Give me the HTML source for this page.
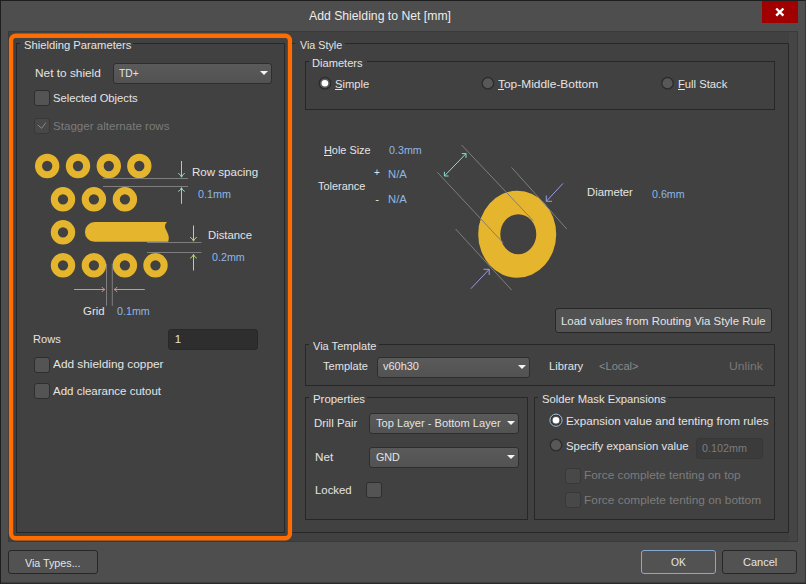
<!DOCTYPE html>
<html><head><meta charset="utf-8"><title>Add Shielding to Net [mm]</title>
<style>
html,body{margin:0;padding:0;background:#4e4e4e;}
body{width:806px;height:584px;overflow:hidden;font-family:"Liberation Sans",sans-serif;}
#win{position:relative;width:806px;height:584px;background:#4e4e4e;overflow:hidden;}
#win>*{position:absolute;box-sizing:border-box;}
.t{position:absolute;white-space:nowrap;line-height:16px;transform-origin:0 0;font-family:"Liberation Sans",sans-serif;}
.t u{text-decoration:underline;text-underline-offset:1px;}
.frame{left:0;top:0;width:806px;height:584px;border:1px solid;border-color:#1e1e1e #383838 #2a2a2a #1e1e1e;}
.panel{left:8px;top:31px;width:790px;height:511px;background:#414141;border:1px solid #3a3a3a;}
.grp{border:1px solid #272727;}
.gap{background:#414141;height:3px;}
.dd{background:linear-gradient(#5a5a5a,#525252);border:1px solid #2e2e2e;border-radius:3px;}
.dd:after{content:"";position:absolute;right:3px;top:6.5px;border-left:4.5px solid transparent;border-right:4.5px solid transparent;border-top:4.5px solid #f4f4f4;}
.btn{background:#525252;border:1px solid #272727;border-radius:3px;}
.btn.def{border-color:#86a9d0;}
.cb{width:16px;height:16px;background:#545454;border:1px solid #2e2e2e;border-radius:3px;}
.cb.dis{background:#484848;border-color:#383838;}
.inp{background:#2e2e2e;border:1px solid #282828;border-radius:3px;}
.inp.dis{background:#3b3b3b;border-color:#373737;}
.close{left:762px;top:1px;width:36px;height:22px;background:#a00000;}
svg{overflow:visible;}

</style></head>
<body>
<div id="win">
<div class="frame"></div>
<div class="close"><svg width="36" height="22" viewBox="0 0 36 22"><path d="M14.2 7.5 L21.4 14.7 M21.4 7.5 L14.2 14.7" stroke="#fff" stroke-width="2.4" fill="none"/></svg></div>
<div class="panel"></div>
<div style="left:789px;top:32px;width:8px;height:509px;background:#454545"></div>
<div style="left:1px;top:582px;width:804px;height:1px;background:#3e3e3e"></div>

<!-- group boxes -->
<div class="grp" style="left:16px;top:43px;width:269px;height:490px"></div>
<div class="gap" style="left:20px;top:42px;width:113px"></div>
<div class="grp" style="left:290px;top:43px;width:499px;height:490px"></div>
<div class="gap" style="left:295px;top:42px;width:50px"></div>
<div class="grp" style="left:305px;top:61px;width:470px;height:49px"></div>
<div class="gap" style="left:309px;top:60px;width:58px"></div>
<div class="grp" style="left:305px;top:344px;width:470px;height:42px"></div>
<div class="gap" style="left:309px;top:343px;width:70px"></div>
<div class="grp" style="left:305px;top:397px;width:223px;height:123px"></div>
<div class="gap" style="left:309px;top:396px;width:58px"></div>
<div class="grp" style="left:534px;top:397px;width:241px;height:123px"></div>
<div class="gap" style="left:538px;top:396px;width:130px"></div>

<!-- orange highlight -->
<svg style="left:0;top:0" width="806" height="584"><rect x="11.05" y="35.75" width="278.9" height="502.5" rx="4.6" ry="4.6" fill="none" stroke="#ff6c02" stroke-width="4.3"/></svg>

<!-- left panel controls -->
<div class="dd" style="left:113px;top:63px;width:159px;height:21px"></div>
<div class="cb" style="left:34px;top:90px"></div>
<div class="cb dis" style="left:34px;top:118px"><svg width="14" height="14" viewBox="0 0 14 14" style="display:block"><path d="M2.9 6 L6.6 9.3 L10.9 3.6" stroke="#8a8a8a" stroke-width="1" fill="none"/></svg></div>
<div class="inp" style="left:168px;top:329px;width:90px;height:21px"></div>
<div class="cb" style="left:34px;top:357px"></div>
<div class="cb" style="left:34px;top:383px"></div>

<!-- via pattern graphic -->
<svg style="left:0;top:0" width="806" height="584">
 <g fill="#e6b52e">
  <g fill="none" stroke="#e6b52e" stroke-width="7.05">
   <circle cx="47.2" cy="166" r="8.68"/><circle cx="78" cy="166" r="8.68"/><circle cx="108.8" cy="166" r="8.68"/><circle cx="139.3" cy="166" r="8.68"/>
   <circle cx="63" cy="199.3" r="8.68"/><circle cx="93.9" cy="199.3" r="8.68"/><circle cx="124.9" cy="199.3" r="8.68"/>
   <circle cx="63" cy="232.3" r="8.68"/>
   <circle cx="63" cy="265.3" r="8.68"/><circle cx="93.9" cy="265.3" r="8.68"/><circle cx="124.9" cy="265.3" r="8.68"/><circle cx="155.5" cy="265.3" r="8.68"/>
  </g>
  <path d="M94.8 222 H167 C165 224 164.6 226 165.2 228 C166.5 231.5 169 234.5 168.8 238 C168.7 239.5 168.4 241 168.2 241.8 H94.8 A9.9 9.9 0 0 1 94.8 222 Z"/>
 </g>
 <g stroke="#7e7e7e" stroke-width="1" fill="none">
  <path d="M103 178.5 H188 M103 186.5 H188"/>
  <path d="M147 242.5 H201.5 M147 252.5 H201.5"/>
  <path d="M106.5 263.8 V305.8 M112.3 263.8 V305.8"/>
 </g>
 <g stroke="#7fe0c0" stroke-width="1" fill="none">
  <path d="M181.5 161 V177 M178.2 173.3 Q180.8 174.5 181.5 177.2 Q182.2 174.5 184.8 173.3"/>
  <path d="M181.5 203.8 V187.8 M178.2 191.5 Q180.8 190.3 181.5 187.6 Q182.2 190.3 184.8 191.5"/>
 </g>
 <g stroke="#b4dc6a" stroke-width="1" fill="none">
  <path d="M193.5 225.5 V241 M190.2 237.3 Q192.8 238.5 193.5 241.2 Q194.2 238.5 196.8 237.3"/>
  <path d="M193.5 270.5 V254.5 M190.2 258.2 Q192.8 257 193.5 254.3 Q194.2 257 196.8 258.2"/>
 </g>
 <g stroke="#e88a8a" stroke-width="1" fill="none">
  <path d="M74 289.5 H104.8 M101.9 287 Q103 289 105 289.5 Q103 290 101.9 292"/>
  <path d="M144.8 289.5 H114.2 M117.1 287 Q116 289 114 289.5 Q116 290 117.1 292"/>
 </g>
</svg>

<!-- Via Style: radios -->
<svg style="left:0;top:0" width="806" height="584">
 <g>
  <circle cx="324.9" cy="83.2" r="5.7" fill="#5a5a5a" stroke="#2b2b2b" stroke-width="1.3"/><circle cx="324.9" cy="83.2" r="3.3" fill="#fff"/>
  <circle cx="487.9" cy="83.2" r="5.7" fill="#585858" stroke="#2c2c2c" stroke-width="1.3"/>
  <circle cx="667.5" cy="83.2" r="5.7" fill="#585858" stroke="#2c2c2c" stroke-width="1.3"/>
  <circle cx="556" cy="420.2" r="6.1" fill="#2c2c2c" stroke="#a9c4e0" stroke-width="1"/><circle cx="556" cy="420.2" r="4.6" fill="#505050"/><circle cx="556" cy="420.2" r="3.3" fill="#fff"/>
  <circle cx="556" cy="445.1" r="5.7" fill="#585858" stroke="#2c2c2c" stroke-width="1.3"/>
 </g>
 <!-- big via -->
 <g>
  <path fill="#e6b52e" fill-rule="evenodd" d="M478.2 234.2 a39 43.5 0 1 0 78 0 a39 43.5 0 1 0 -78 0 Z M500.3 234.2 a18 20 0 1 0 36 0 a18 20 0 1 0 -36 0 Z"/>
  <g stroke="#7e7e7e" stroke-width="1" fill="none">
   <path d="M461.6 145 L533.2 220.7"/>
   <path d="M437.3 172.2 L503.4 243.1"/>
   <path d="M511.6 167.4 L566.8 229"/>
   <path d="M455.6 229 L511.6 290"/>
  </g>
  <g stroke="#7fe0d0" stroke-width="1" fill="none">
   <path d="M444.4 176 L466 153.6 M444.4 171.8 V176 H448.6 M461.8 153.6 H466 V157.8"/>
  </g>
  <g stroke="#9a9ae0" stroke-width="1" fill="none">
   <path d="M563 183.4 L546.3 201.3 M546.3 195.5 V201.3 H552"/>
   <path d="M470.9 288.7 L489.2 269.3 M483.5 269.3 H489.2 V275"/>
  </g>
 </g>
</svg>

<!-- right side controls -->
<div class="btn" style="left:555px;top:308px;width:217px;height:25px"></div>
<div class="dd" style="left:377px;top:357px;width:153px;height:21px"></div>
<div class="dd" style="left:369px;top:413px;width:150px;height:21px"></div>
<div class="dd" style="left:369px;top:447px;width:150px;height:21px"></div>
<div class="cb" style="left:366px;top:482px"></div>
<div class="inp dis" style="left:696px;top:438px;width:67px;height:21px"></div>
<div class="cb dis" style="left:565px;top:468px"></div>
<div class="cb dis" style="left:565px;top:492px"></div>

<!-- bottom buttons -->
<div class="btn" style="left:8px;top:550px;width:90px;height:24px"></div>
<div class="btn def" style="left:641px;top:550px;width:75px;height:24px"></div>
<div class="btn" style="left:722px;top:550px;width:75px;height:24px"></div>

<span class="t" id="t0" style="left:308.97px;top:7.70px;font-size:12.5px;color:#ececec;transform:scaleX(0.978);">Add Shielding to Net [mm]</span>
<span class="t" id="t1" style="left:24.09px;top:37.40px;font-size:11.5px;color:#e4e4e4;transform:scaleX(0.977);">Shielding Parameters</span>
<span class="t" id="t2" style="left:34.62px;top:64.90px;font-size:11.5px;color:#e4e4e4;transform:scaleX(1.030);">Net to shield</span>
<span class="t" id="t3" style="left:119.14px;top:64.90px;font-size:11.5px;color:#e4e4e4;transform:scaleX(0.893);">TD+</span>
<span class="t" id="t4" style="left:53.07px;top:89.70px;font-size:11.5px;color:#e4e4e4;transform:scaleX(0.973);">Selected Objects</span>
<span class="t" id="t5" style="left:53.02px;top:117.80px;font-size:11.5px;color:#7c7c7c;transform:scaleX(1.007);">Stagger alternate rows</span>
<span class="t" id="t6" style="left:191.72px;top:163.60px;font-size:11px;color:#e4e4e4;transform:scaleX(1.051);">Row spacing</span>
<span class="t" id="t7" style="left:197.69px;top:185.80px;font-size:11px;color:#8db6e6;transform:scaleX(0.978);">0.1mm</span>
<span class="t" id="t8" style="left:207.85px;top:227.00px;font-size:11px;color:#e4e4e4;transform:scaleX(1.030);">Distance</span>
<span class="t" id="t9" style="left:211.69px;top:248.90px;font-size:11px;color:#8db6e6;transform:scaleX(0.973);">0.2mm</span>
<span class="t" id="t10" style="left:83.21px;top:303.00px;font-size:11px;color:#e4e4e4;transform:scaleX(1.039);">Grid</span>
<span class="t" id="t11" style="left:117.04px;top:303.00px;font-size:11px;color:#8db6e6;transform:scaleX(0.974);">0.1mm</span>
<span class="t" id="t12" style="left:33.22px;top:330.60px;font-size:11.5px;color:#e4e4e4;transform:scaleX(0.964);">Rows</span>
<span class="t" id="t13" style="left:174.68px;top:330.60px;font-size:11.5px;color:#e4e4e4;">1</span>
<span class="t" id="t14" style="left:52.97px;top:356.00px;font-size:11.5px;color:#e4e4e4;transform:scaleX(1.029);">Add shielding copper</span>
<span class="t" id="t15" style="left:52.97px;top:382.80px;font-size:11.5px;color:#e4e4e4;">Add clearance cutout</span>
<span class="t" id="t16" style="left:24.86px;top:555.00px;font-size:11.5px;color:#e4e4e4;transform:scaleX(0.931);">Via Types...</span>
<span class="t" id="t17" style="left:299.52px;top:36.60px;font-size:11.5px;color:#e4e4e4;transform:scaleX(0.935);">Via Style</span>
<span class="t" id="t18" style="left:312.45px;top:54.50px;font-size:11.5px;color:#e4e4e4;transform:scaleX(0.965);">Diameters</span>
<span class="t" id="t19" style="left:334.90px;top:75.90px;font-size:11.5px;color:#e4e4e4;transform:scaleX(0.972);"><u>S</u>imple</span>
<span class="t" id="t20" style="left:497.75px;top:75.90px;font-size:11.5px;color:#e4e4e4;transform:scaleX(1.038);"><u>T</u>op-Middle-Bottom</span>
<span class="t" id="t21" style="left:677.55px;top:75.90px;font-size:11.5px;color:#e4e4e4;transform:scaleX(0.976);"><u>F</u>ull Stack</span>
<span class="t" id="t22" style="left:323.91px;top:142.00px;font-size:11.5px;color:#e4e4e4;transform:scaleX(0.946);"><u>H</u>ole Size</span>
<span class="t" id="t23" style="left:388.67px;top:142.40px;font-size:11px;color:#8db6e6;transform:scaleX(0.975);">0.3mm</span>
<span class="t" id="t24" style="left:373.94px;top:165.00px;font-size:10px;color:#e4e4e4;">+</span>
<span class="t" id="t25" style="left:387.79px;top:165.60px;font-size:11.5px;color:#8db6e6;transform:scaleX(0.981);">N/A</span>
<span class="t" id="t26" style="left:318.49px;top:177.80px;font-size:11.5px;color:#e4e4e4;transform:scaleX(0.951);">Tolerance</span>
<span class="t" id="t27" style="left:375.33px;top:191.00px;font-size:11.5px;color:#e4e4e4;">-</span>
<span class="t" id="t28" style="left:387.79px;top:191.40px;font-size:11.5px;color:#8db6e6;transform:scaleX(0.981);">N/A</span>
<span class="t" id="t29" style="left:587.23px;top:183.80px;font-size:11.5px;color:#e4e4e4;transform:scaleX(0.983);">Diameter</span>
<span class="t" id="t30" style="left:652.32px;top:185.70px;font-size:11px;color:#8db6e6;transform:scaleX(0.970);">0.6mm</span>
<span class="t" id="t31" style="left:560.77px;top:313.30px;font-size:11.5px;color:#e4e4e4;transform:scaleX(0.992);">Load values from Routing Via Style Rule</span>
<span class="t" id="t32" style="left:312.88px;top:337.90px;font-size:11.5px;color:#e4e4e4;transform:scaleX(0.960);">Via Template</span>
<span class="t" id="t33" style="left:322.76px;top:358.00px;font-size:11.5px;color:#e4e4e4;transform:scaleX(0.961);">Template</span>
<span class="t" id="t34" style="left:382.88px;top:358.00px;font-size:11.5px;color:#e4e4e4;transform:scaleX(0.953);">v60h30</span>
<span class="t" id="t35" style="left:548.80px;top:357.80px;font-size:11.5px;color:#e4e4e4;transform:scaleX(0.973);">Library</span>
<span class="t" id="t36" style="left:598.64px;top:358.00px;font-size:11.5px;color:#8a8a8a;transform:scaleX(0.967);">&lt;Local&gt;</span>
<span class="t" id="t37" style="left:728.75px;top:357.80px;font-size:11.5px;color:#787878;transform:scaleX(1.058);">Unlink</span>
<span class="t" id="t38" style="left:312.82px;top:390.70px;font-size:11.5px;color:#e4e4e4;transform:scaleX(0.993);">Properties</span>
<span class="t" id="t39" style="left:313.77px;top:414.60px;font-size:11.5px;color:#e4e4e4;transform:scaleX(0.995);">Drill Pair</span>
<span class="t" id="t40" style="left:376.49px;top:414.60px;font-size:11.5px;color:#e4e4e4;transform:scaleX(0.965);">Top Layer - Bottom Layer</span>
<span class="t" id="t41" style="left:314.64px;top:448.90px;font-size:11.5px;color:#e4e4e4;transform:scaleX(1.015);">Net</span>
<span class="t" id="t42" style="left:375.94px;top:448.90px;font-size:11.5px;color:#e4e4e4;transform:scaleX(0.933);">GND</span>
<span class="t" id="t43" style="left:314.77px;top:481.80px;font-size:11.5px;color:#e4e4e4;transform:scaleX(0.989);">Locked</span>
<span class="t" id="t44" style="left:542.07px;top:390.70px;font-size:11.5px;color:#e4e4e4;transform:scaleX(0.978);">Solder Mask Expansions</span>
<span class="t" id="t45" style="left:565.64px;top:413.40px;font-size:11.5px;color:#e4e4e4;transform:scaleX(1.019);">Expansion value and tenting from rules</span>
<span class="t" id="t46" style="left:565.89px;top:437.90px;font-size:11.5px;color:#e4e4e4;transform:scaleX(0.989);">Specify expansion value</span>
<span class="t" id="t47" style="left:701.67px;top:440.00px;font-size:11.5px;color:#7c7c7c;transform:scaleX(0.936);">0.102mm</span>
<span class="t" id="t48" style="left:584.17px;top:466.90px;font-size:11.5px;color:#7c7c7c;transform:scaleX(1.030);">Force complete tenting on top</span>
<span class="t" id="t49" style="left:584.17px;top:492.00px;font-size:11.5px;color:#7c7c7c;transform:scaleX(1.034);">Force complete tenting on bottom</span>
<span class="t" id="t50" style="left:671.46px;top:554.20px;font-size:11.5px;color:#e4e4e4;transform:scaleX(0.893);">OK</span>
<span class="t" id="t51" style="left:742.94px;top:554.20px;font-size:11.5px;color:#e4e4e4;transform:scaleX(0.958);">Cancel</span>
</div>
</body></html>
